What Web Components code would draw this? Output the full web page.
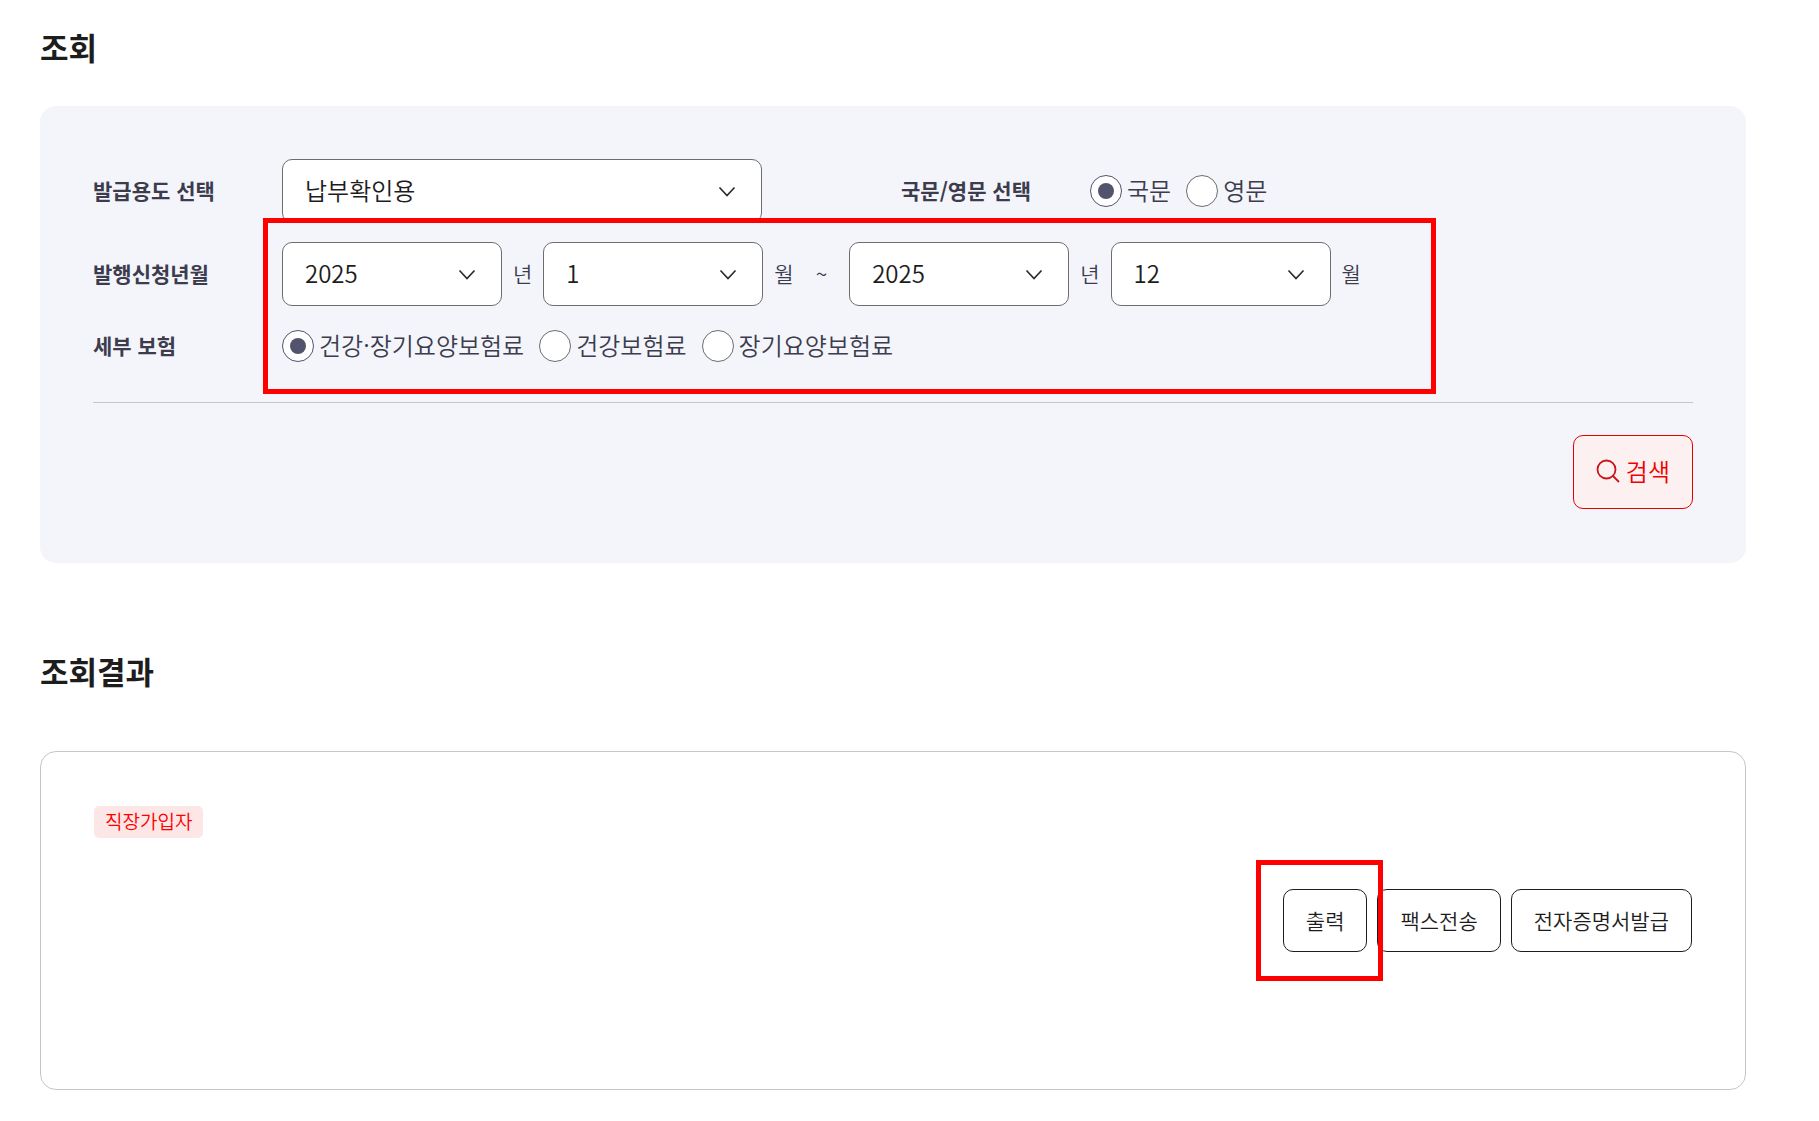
<!DOCTYPE html>
<html lang="ko">
<head>
<meta charset="utf-8">
<title>조회</title>
<style>
  body {
    margin: 0;
    padding: 25px 73px 25px 40px;
    background: #fff;
    color: #1d1d1d;
    font-family: "Noto Sans CJK KR", sans-serif;
    font-size: 21px;
    font-weight: 350;
    line-height: 32px;
  }
</style>
</head>
<body>
  <page-section heading="조회">
    <search-panel></search-panel>
  </page-section>
  <page-section heading="조회결과" class="result">
    <result-card></result-card>
  </page-section>

<script>
// Shared base: renders the template of the element into its shadow root
class BaseElement extends HTMLElement {
  constructor() {
    super();
    this.attachShadow({ mode: "open" });
  }

  connectedCallback() {
    this.shadowRoot.innerHTML = this.template;
  }
}

class PageSection extends BaseElement {
  get template() {
    return `
      <style>
        :host { display: block; }
        :host(.result) { margin-top: 86px; }
        :host(.result) h2 { margin-bottom: 58px; }
        h2 {
          margin: 0 0 37px;
          font-size: 31px;
          line-height: 44px;
          font-weight: 700;
        }
      </style>
      <h2>${this.getAttribute("heading")}</h2>
      <slot></slot>
    `;
  }
}

class SelectBox extends BaseElement {
  get template() {
    const options = this.getAttribute("options").split(",");
    const value = this.getAttribute("value") || options[0];
    return `
      <style>
        :host {
          display: inline-grid;
          width: 220px;
          align-items: center;
        }
        :host([wide]) { width: 480px; }
        select, svg { grid-area: 1 / 1; }
        select {
          appearance: none;
          box-sizing: border-box;
          width: 100%;
          height: 64px;
          margin: 0;
          padding: 0 60px 2px 22px;
          border: 1px solid #6d6d6d;
          border-radius: 10px;
          background: #fff;
          color: #1d1d1d;
          font: inherit;
          font-size: 24px;
        }
        svg {
          justify-self: end;
          margin-right: 26px;
          pointer-events: none;
        }
      </style>
      <select aria-label="${this.getAttribute("label")}">
        ${options.map((o) => `<option${o === value ? " selected" : ""}>${o}</option>`).join("")}
      </select>
      <svg width="18" height="14" viewBox="0 0 18 14" fill="none" stroke="#2b2b2b" stroke-width="1.7">
        <path d="M1.5 3.5 9 11.5l7.5-8"/>
      </svg>
    `;
  }
}

class RadioGroup extends BaseElement {
  get template() {
    const name = this.getAttribute("name");
    const items = this.getAttribute("options").split(",");
    return `
      <style>
        :host {
          display: flex;
          gap: 15px;
          color: #3c3c4d;
          font-size: 24px;
        }
        label {
          display: flex;
          align-items: center;
          gap: 5px;
        }
        input {
          appearance: none;
          display: grid;
          place-content: center;
          box-sizing: border-box;
          width: 32px;
          height: 32px;
          margin: 0;
          border: 1px solid #6d6d6d;
          border-radius: 50%;
          background: #fff;
        }
        input:checked { border-color: #52546e; }
        input:checked::before {
          content: "";
          width: 16px;
          height: 16px;
          border-radius: 50%;
          background: #52546e;
        }
        span { padding-bottom: 2px; }
      </style>
      ${items.map((text, i) => `
        <label><input type="radio" name="${name}"${i === 0 ? " checked" : ""}><span>${text}</span></label>
      `).join("")}
    `;
  }
}

class ActionButton extends BaseElement {
  get template() {
    return `
      <style>
        :host { display: inline-block; }
        button {
          display: flex;
          align-items: center;
          gap: 6px;
          height: 63px;
          margin: 0;
          padding: 0 22px 2px;
          border: 1px solid #1d1d1d;
          border-radius: 10px;
          background: #fff;
          color: #1d1d1d;
          font: inherit;
          cursor: pointer;
        }
        :host([primary]) button {
          height: 74px;
          border-color: #e60000;
          background: #fdf0f0;
          color: #f00000;
          font-size: 24px;
        }
      </style>
      <button type="button"><slot name="icon"></slot><slot></slot></button>
    `;
  }
}

// Red frame drawn over the part of the form being explained
class MarkBox extends BaseElement {
  get template() {
    return `
      <style>
        :host {
          position: absolute;
          box-sizing: border-box;
          border: 5px solid #f00;
          pointer-events: none;
        }
      </style>
    `;
  }
}

class SearchPanel extends BaseElement {
  get template() {
    return `
      <style>
        :host {
          display: block;
          padding: 53px 53px 54px;
          border-radius: 16px;
          background: #f3f5fb;
        }
        .rows {
          display: grid;
          gap: 19px;
          padding-bottom: 35px;
          border-bottom: 1px solid #c6c6c6;
        }
        .row, .half, .period {
          display: flex;
          align-items: center;
        }
        .row { min-height: 42px; }
        .row.split {
          display: grid;
          grid-template-columns: 1fr 1fr;
          gap: 16px;
        }
        .label {
          flex: none;
          width: 189px;
          padding-bottom: 2px;
          color: #3c3c4d;
          font-weight: 700;
        }
        .marked {
          position: relative;
          display: grid;
          gap: 19px;
        }
        .period {
          gap: 11px;
          color: #3c3c4d;
        }
        .period span { padding-bottom: 2px; }
        .period .tilde { padding: 0 11px 2px; }
        mark-box {
          top: -24px;
          bottom: -27px;
          left: 170px;
          width: 1173px;
        }
        .actions {
          display: flex;
          justify-content: flex-end;
          padding-top: 32px;
        }
      </style>
      <div class="rows">
        <div class="row split">
          <div class="half">
            <span class="label">발급용도 선택</span>
            <select-box wide label="발급용도 선택" options="납부확인용"></select-box>
          </div>
          <div class="half">
            <span class="label">국문/영문 선택</span>
            <radio-group name="lang" options="국문,영문"></radio-group>
          </div>
        </div>
        <div class="marked">
          <div class="row">
            <span class="label">발행신청년월</span>
            <div class="period">
              <select-box label="시작 년" options="2025,2024,2023"></select-box>
              <span>년</span>
              <select-box label="시작 월" options="1,2,3,4,5,6,7,8,9,10,11,12"></select-box>
              <span>월</span>
              <span class="tilde">~</span>
              <select-box label="종료 년" options="2025,2024,2023"></select-box>
              <span>년</span>
              <select-box label="종료 월" value="12" options="1,2,3,4,5,6,7,8,9,10,11,12"></select-box>
              <span>월</span>
            </div>
          </div>
          <div class="row">
            <span class="label">세부 보험</span>
            <radio-group name="insurance" options="건강·장기요양보험료,건강보험료,장기요양보험료"></radio-group>
          </div>
          <mark-box></mark-box>
        </div>
      </div>
      <div class="actions">
        <action-button primary>
          <svg slot="icon" width="24" height="24" viewBox="0 0 24 24" fill="none" stroke="#c9151b" stroke-width="1.8">
            <circle cx="10.5" cy="10.5" r="9"/>
            <path d="m16.5 16.5 6.5 6.5"/>
          </svg>
          검색
        </action-button>
      </div>
    `;
  }
}

class ResultCard extends BaseElement {
  get template() {
    return `
      <style>
        :host {
          display: block;
          padding: 54px 53px 137px;
          border: 1px solid #c6c6c6;
          border-radius: 16px;
        }
        .badge {
          display: block;
          box-sizing: border-box;
          width: fit-content;
          height: 32px;
          padding: 0 11px;
          border-radius: 5px;
          background: #fce6e6;
          color: #f00;
          font-size: 19px;
          line-height: 30px;
        }
        .actions {
          display: flex;
          justify-content: flex-end;
          gap: 10px;
          margin-top: 51px;
        }
        .print { position: relative; }
        mark-box {
          top: -29px;
          right: -16px;
          bottom: -29px;
          left: -27px;
          z-index: 1;
        }
      </style>
      <span class="badge">직장가입자</span>
      <div class="actions">
        <div class="print">
          <action-button>출력</action-button>
          <mark-box></mark-box>
        </div>
        <action-button>팩스전송</action-button>
        <action-button>전자증명서발급</action-button>
      </div>
    `;
  }
}

customElements.define("page-section", PageSection);
customElements.define("select-box", SelectBox);
customElements.define("radio-group", RadioGroup);
customElements.define("action-button", ActionButton);
customElements.define("mark-box", MarkBox);
customElements.define("search-panel", SearchPanel);
customElements.define("result-card", ResultCard);
</script>
</body>
</html>
